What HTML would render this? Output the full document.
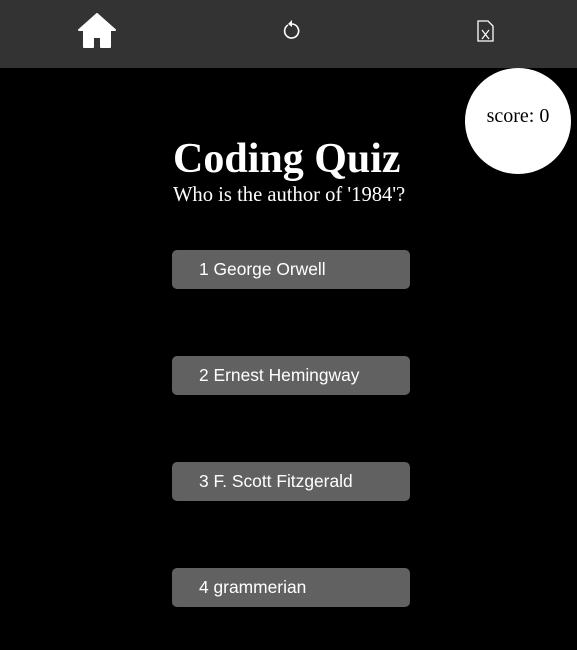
<!DOCTYPE html>
<html><head><style>
body{margin:0;background:#000;width:577px;height:650px;overflow:hidden;position:relative}
.hdr{position:absolute;left:0;top:0;width:577px;height:68px;background:#333}
.circ{position:absolute;left:465px;top:68px;width:106px;height:106px;border-radius:50%;background:#fff;font:20px "Liberation Serif",serif;text-align:center;line-height:96px;color:#000}
h1{position:absolute;left:173px;top:135px;margin:0;font:bold 42px "Liberation Serif",serif;color:#fff;line-height:48px}
.q{position:absolute;left:173px;top:183px;font:20.6px "Liberation Serif",serif;color:#fff;line-height:24px}
.b{position:absolute;left:172px;width:238px;height:39px;background:#616161;border-radius:5px;color:#fff;font:17.4px "Liberation Sans",sans-serif;line-height:39px;padding-left:27px;box-sizing:border-box}
</style></head><body>
<div class="hdr">
<svg style="position:absolute;left:78px;top:13px" width="38" height="35" viewBox="0 0 38 35"><path d="M19 1 L37 17 L32 17 L32 34 L23 34 L23 24 L15 24 L15 34 L6 34 L6 17 L1 17 Z" fill="#fff" stroke="#fff" stroke-linejoin="round" stroke-width="2"/></svg>
<svg style="position:absolute;left:282px;top:20px" width="18" height="20" viewBox="0 0 18 20"><path d="M6 5 A7 7 0 1 0 10 4" fill="none" stroke="#fff" stroke-width="1.6"/><path d="M10 0 L6 4 L10 7 Z" fill="#fff"/></svg>
<svg style="position:absolute;left:477px;top:20px" width="18" height="23" viewBox="0 0 18 23"><path d="M1 1 H11 L16 6 V21 H1 Z" fill="none" stroke="#fff" stroke-width="1.3"/><path d="M5 10 L12 19 M12 10 L5 19" stroke="#fff" stroke-width="1.2"/></svg>
</div>
<div class="circ">score: 0</div>
<h1>Coding Quiz</h1>
<div class="q">Who is the author of '1984'?</div>
<div class="b" style="top:250px">1 George Orwell</div>
<div class="b" style="top:356px">2 Ernest Hemingway</div>
<div class="b" style="top:462px">3 F. Scott Fitzgerald</div>
<div class="b" style="top:568px">4 grammerian</div>
</body></html>
